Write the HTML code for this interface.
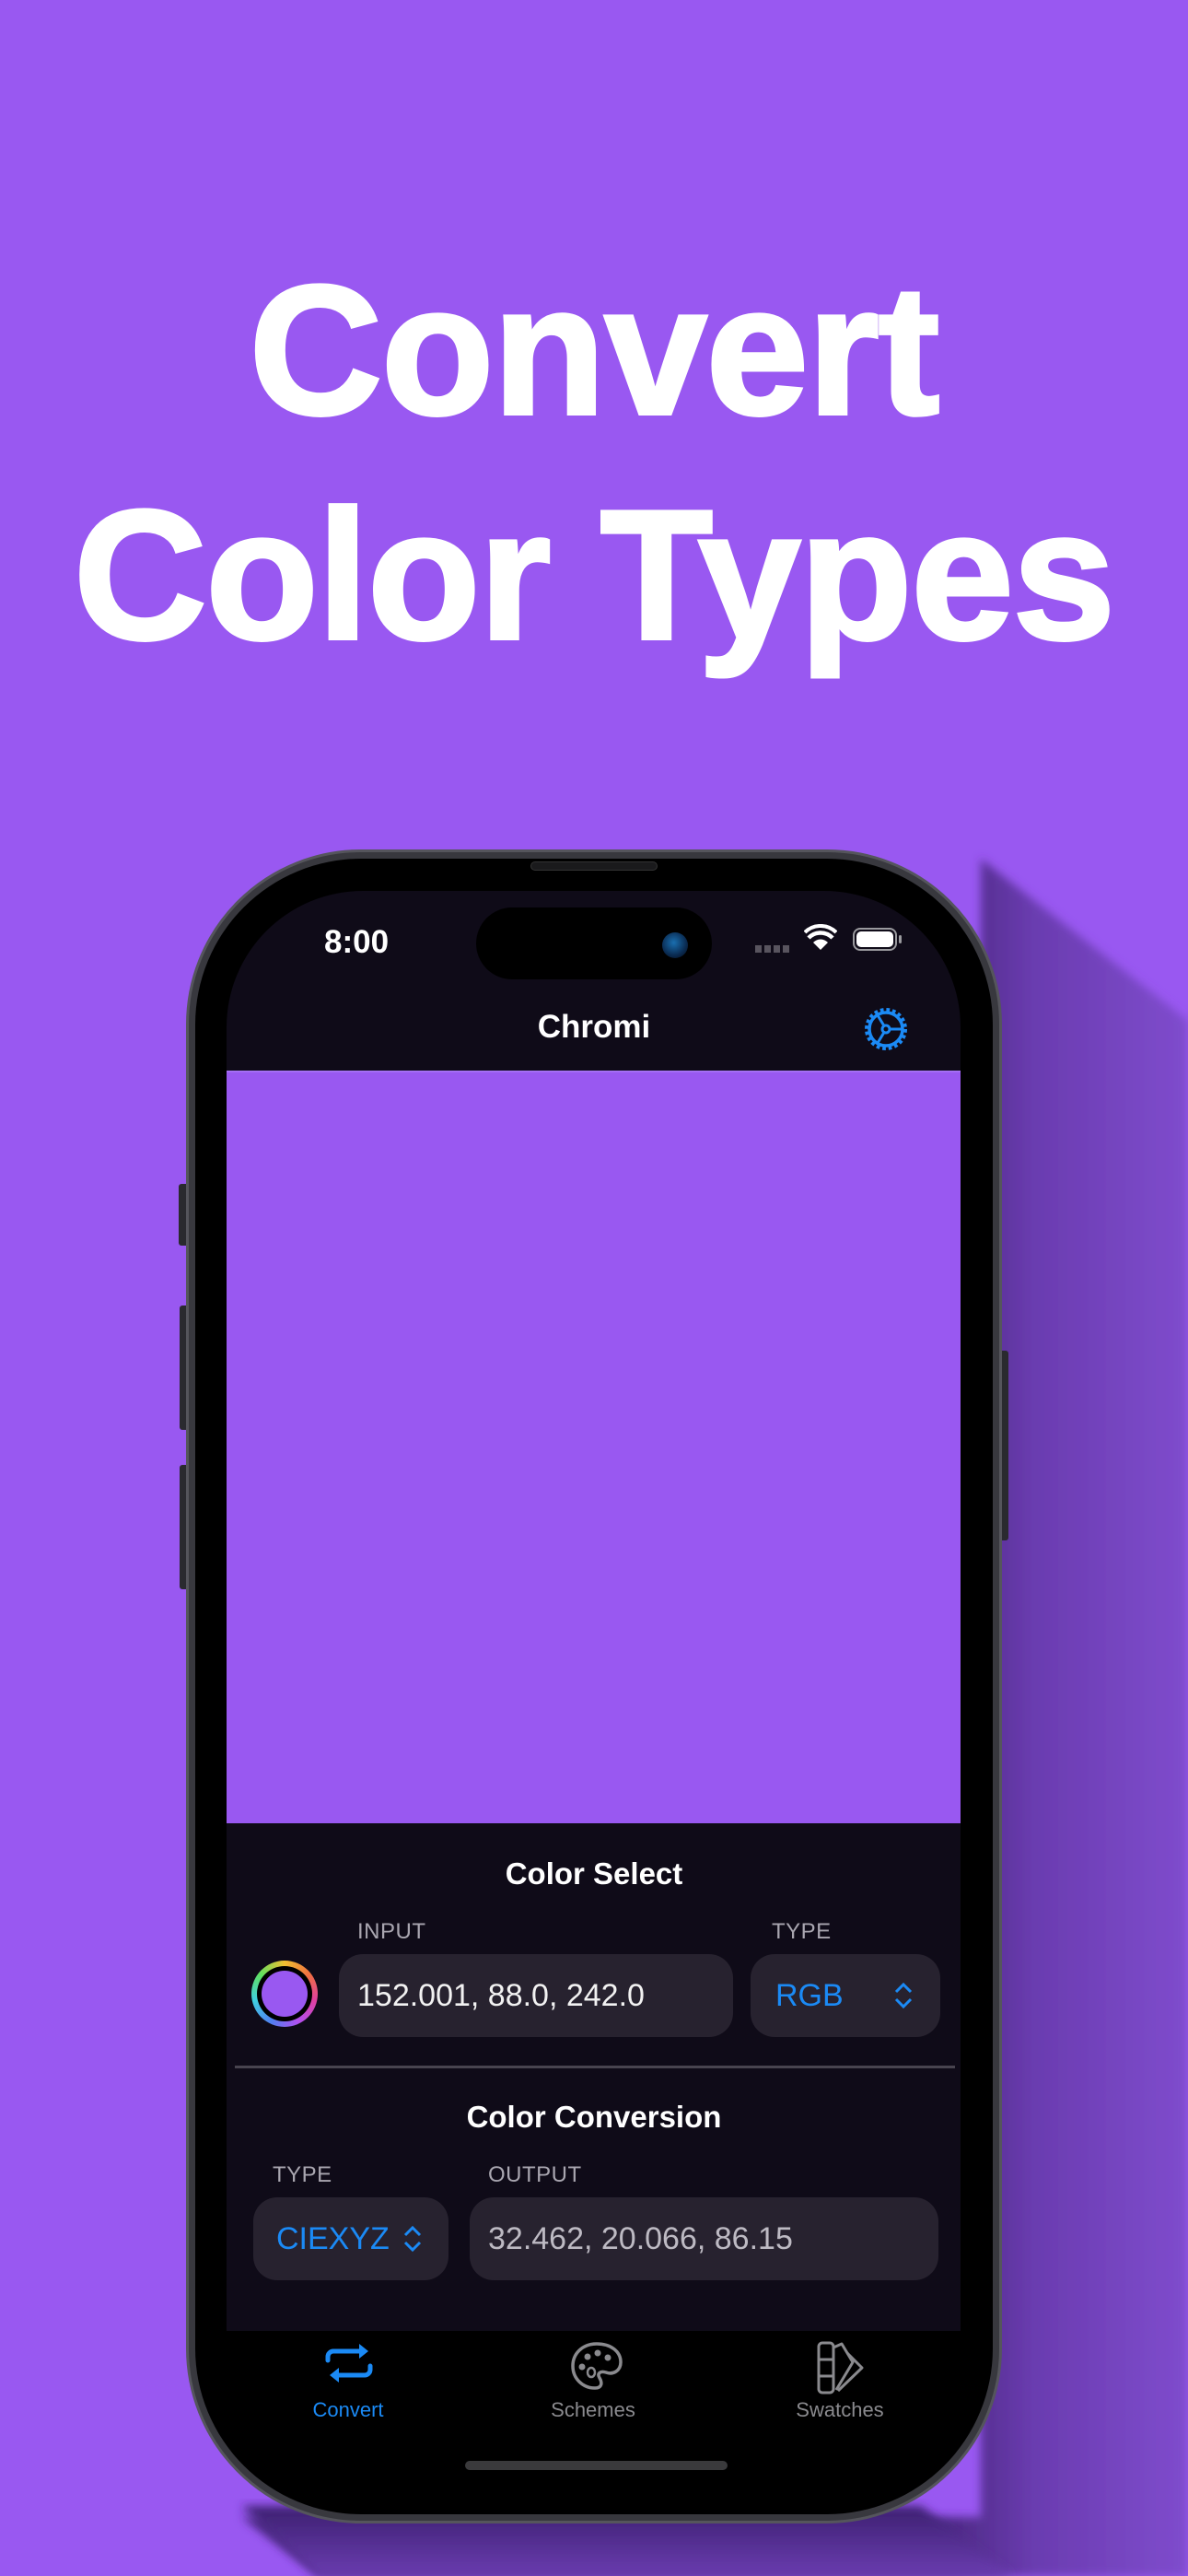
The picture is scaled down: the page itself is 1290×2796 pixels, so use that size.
<!DOCTYPE html>
<html><head><meta charset="utf-8">
<style>
*{margin:0;padding:0;box-sizing:border-box}
html,body{width:1290px;height:2796px;overflow:hidden;background:#9958f1;font-family:"Liberation Sans",sans-serif}
.abs{position:absolute}
.title{position:absolute;left:0;width:1290px;text-align:center;color:#fff;font-weight:700;font-size:200px;letter-spacing:-1px;line-height:1;-webkit-text-stroke:4px #fff}
.lbl{position:absolute;color:#a9a6b0;font-size:24px;letter-spacing:0.5px}
.field{position:absolute;background:#27222f;border-radius:26px}
.ftxt{position:absolute;font-size:34px;color:#f2f2f2}
</style></head><body>
<svg class="abs" style="left:0;top:0" width="1290" height="2796">
<defs>
<linearGradient id="sg" x1="0.75" y1="0" x2="1" y2="0">
<stop offset="0" stop-color="#4e2a86"/><stop offset="0.35" stop-color="#6a3cb0"/><stop offset="1" stop-color="#7f4ccd"/>
</linearGradient>
<linearGradient id="sg2" x1="0" y1="0" x2="0" y2="1">
<stop offset="0" stop-color="#3c2070"/><stop offset="1" stop-color="#6a3cb0"/>
</linearGradient>
<filter id="bl"><feGaussianBlur stdDeviation="5"/></filter>
</defs>
<polygon points="1065,932 1290,1108 1290,2796 345,2796 262,2732 1065,2732" fill="url(#sg)" filter="url(#bl)"/>
<polygon points="262,2720 1000,2720 1100,2796 345,2796" fill="url(#sg2)" filter="url(#bl)"/>
</svg>
<div class="title" style="top:281px">Convert</div>
<div class="title" style="top:525px">Color Types</div>

<!-- side buttons -->
<div class="abs" style="left:194px;top:1285px;width:12px;height:67px;background:#2a2a2f;border-radius:3px"></div>
<div class="abs" style="left:195px;top:1417px;width:11px;height:135px;background:#2a2a2f;border-radius:3px"></div>
<div class="abs" style="left:195px;top:1590px;width:11px;height:135px;background:#2a2a2f;border-radius:3px"></div>
<div class="abs" style="left:1084px;top:1466px;width:11px;height:206px;background:#2a2a2f;border-radius:3px"></div>
<!-- frame -->
<div class="abs" style="left:202px;top:922px;width:886px;height:1817px;border-radius:190px;background:#38383e;border:3px solid #55555c"></div>
<div class="abs" style="left:212px;top:932px;width:866px;height:1797px;border-radius:180px;background:#000"></div>
<div class="abs" style="left:576px;top:935px;width:138px;height:10px;border-radius:5px;background:#1a1a1c;border:1px solid #333"></div>
<!-- screen -->
<div class="abs" style="left:246px;top:967px;width:797px;height:1727px;border-radius:148px;background:#000;overflow:hidden">
  <div class="abs" style="left:0;top:0;width:797px;height:1563px;background:#0f0b18"></div>
  <div class="abs" style="left:0;top:195px;width:797px;height:817px;background:#9958f1;border-top:2px solid #a46ef5"></div>
</div>
<!-- status bar -->
<div class="abs" style="left:352px;top:1003px;font-size:35px;font-weight:700;color:#fff">8:00</div>
<div class="abs" style="left:517px;top:985px;width:256px;height:78px;border-radius:39px;background:#000"></div>
<div class="abs" style="left:719px;top:1012px;width:28px;height:28px;border-radius:50%;background:radial-gradient(circle at 45% 40%,#1a6fb0,#0a2a50 60%,#050a14)"></div>
<div class="abs" style="left:820px;top:1026px;width:40px;height:8px;background:repeating-linear-gradient(90deg,#58545e 0 7px,transparent 7px 10px)"></div>
<svg class="abs" style="left:873px;top:1003px" width="36" height="30" viewBox="0 0 36 30"><path d="M18 28 L10 20 A11 11 0 0 1 26 20 Z" fill="#fff"/><path d="M5 15 A18 18 0 0 1 31 15" stroke="#fff" stroke-width="4.5" fill="none"/><path d="M1 9 A24 24 0 0 1 35 9" stroke="#fff" stroke-width="4" fill="none"/></svg>
<div class="abs" style="left:926px;top:1007px;width:48px;height:25px;border-radius:8px;border:2px solid #9a9a9e;padding:2px"><div style="width:100%;height:100%;background:#fff;border-radius:5px"></div></div>
<div class="abs" style="left:976px;top:1015px;width:3px;height:9px;background:#9a9a9e;border-radius:2px"></div>
<!-- nav -->
<div class="abs" style="left:0;width:1290px;top:1095px;text-align:center;color:#fff;font-size:35px;font-weight:700">Chromi</div>
<svg class="abs" style="left:936px;top:1091px" width="52" height="52" viewBox="0 0 52 52">
<circle cx="26" cy="26" r="20" fill="none" stroke="#1b8af5" stroke-width="6" stroke-dasharray="3.5 2.8"/>
<circle cx="26" cy="26" r="18" fill="none" stroke="#1b8af5" stroke-width="3.5"/>
<circle cx="26" cy="26" r="4" fill="none" stroke="#1b8af5" stroke-width="3"/>
<path d="M30 26 H44 M24 29.5 L17 41 M24 22.5 L17 11" stroke="#1b8af5" stroke-width="3"/>
</svg>
<!-- color select -->
<div class="abs" style="left:0;width:1290px;top:2015px;text-align:center;color:#fff;font-size:33px;font-weight:700">Color Select</div>
<div class="lbl" style="left:388px;top:2083px">INPUT</div>
<div class="lbl" style="left:838px;top:2083px">TYPE</div>
<div class="abs" style="left:273px;top:2128px;width:72px;height:72px;border-radius:50%;background:conic-gradient(#f0c030,#f07040,#e040a0,#b050f0,#5080f0,#40d0e0,#60e060,#f0c030)"></div>
<div class="abs" style="left:279px;top:2134px;width:60px;height:60px;border-radius:50%;background:#000"></div>
<div class="abs" style="left:284px;top:2139px;width:50px;height:50px;border-radius:50%;background:#9958f1"></div>
<div class="field" style="left:368px;top:2121px;width:428px;height:90px"></div>
<div class="ftxt" style="left:388px;top:2147px">152.001, 88.0, 242.0</div>
<div class="field" style="left:815px;top:2121px;width:206px;height:90px"></div>
<div class="ftxt" style="left:842px;top:2147px;color:#1b8af5">RGB</div>
<svg class="abs" style="left:970px;top:2150px" width="22" height="32" viewBox="0 0 22 32"><path d="M3 12 L11 4 L19 12 M3 20 L11 28 L19 20" stroke="#1b8af5" stroke-width="3" fill="none"/></svg>
<div class="abs" style="left:255px;top:2242px;width:782px;height:3px;background:#48444f"></div>
<!-- conversion -->
<div class="abs" style="left:0;width:1290px;top:2279px;text-align:center;color:#fff;font-size:33px;font-weight:700">Color Conversion</div>
<div class="lbl" style="left:296px;top:2347px">TYPE</div>
<div class="lbl" style="left:530px;top:2347px">OUTPUT</div>
<div class="field" style="left:275px;top:2385px;width:212px;height:90px"></div>
<div class="ftxt" style="left:300px;top:2411px;color:#1b8af5">CIEXYZ</div>
<svg class="abs" style="left:437px;top:2414px" width="22" height="32" viewBox="0 0 22 32"><path d="M3 12 L11 4 L19 12 M3 20 L11 28 L19 20" stroke="#1b8af5" stroke-width="3" fill="none"/></svg>
<div class="field" style="left:510px;top:2385px;width:509px;height:90px"></div>
<div class="ftxt" style="left:530px;top:2411px;color:#bdbac3">32.462, 20.066, 86.15</div>
<!-- tab bar -->
<svg class="abs" style="left:352px;top:2542px" width="54" height="50" viewBox="0 0 54 50">
<path d="M4 20 V16 A6 6 0 0 1 10 10 H38" stroke="#1b8af5" stroke-width="5" fill="none" stroke-linecap="round"/><path d="M38 2 L48 10 L38 18 Z" fill="#1b8af5"/>
<path d="M50 26 V30 A6 6 0 0 1 44 36 H16" stroke="#1b8af5" stroke-width="5" fill="none" stroke-linecap="round"/><path d="M16 28 L6 36 L16 44 Z" fill="#1b8af5"/>
</svg>
<div class="abs" style="left:318px;top:2603px;width:120px;text-align:center;font-size:22px;color:#1b8af5">Convert</div>
<svg class="abs" style="left:618px;top:2540px" width="60" height="56" viewBox="0 0 60 56">
<path d="M30 4 C14 4 4 15 4 28 C4 42 15 52 28 52 C36 52 36 46 33 41 C30 36 34 33 40 35 C48 38 56 33 56 24 C56 12 45 4 30 4 Z" fill="none" stroke="#8a8a8e" stroke-width="3.5"/>
<circle cx="20" cy="18" r="3.5" fill="#8a8a8e"/><circle cx="31" cy="14" r="3.5" fill="#8a8a8e"/><circle cx="42" cy="19" r="3.5" fill="#8a8a8e"/><circle cx="14" cy="29" r="3.5" fill="#8a8a8e"/>
<ellipse cx="24" cy="35" rx="4" ry="5" fill="none" stroke="#8a8a8e" stroke-width="2.5"/>
</svg>
<div class="abs" style="left:584px;top:2603px;width:120px;text-align:center;font-size:22px;color:#8a8a8e">Schemes</div>
<svg class="abs" style="left:886px;top:2540px" width="56" height="60" viewBox="0 0 56 60">
<rect x="3" y="3" width="16" height="54" rx="4" fill="none" stroke="#8a8a8e" stroke-width="3"/>
<path d="M3 21 H19 M3 39 H19" stroke="#8a8a8e" stroke-width="3"/>
<path d="M19 8 L28 4 L40 24 L22 54" fill="none" stroke="#8a8a8e" stroke-width="3" stroke-linejoin="round"/>
<path d="M34 14 L50 30 L24 55" fill="none" stroke="#8a8a8e" stroke-width="3" stroke-linejoin="round"/>
</svg>
<div class="abs" style="left:852px;top:2603px;width:120px;text-align:center;font-size:22px;color:#8a8a8e">Swatches</div>
<div class="abs" style="left:505px;top:2671px;width:285px;height:10px;border-radius:5px;background:#3a3a3c"></div>
</body></html>
